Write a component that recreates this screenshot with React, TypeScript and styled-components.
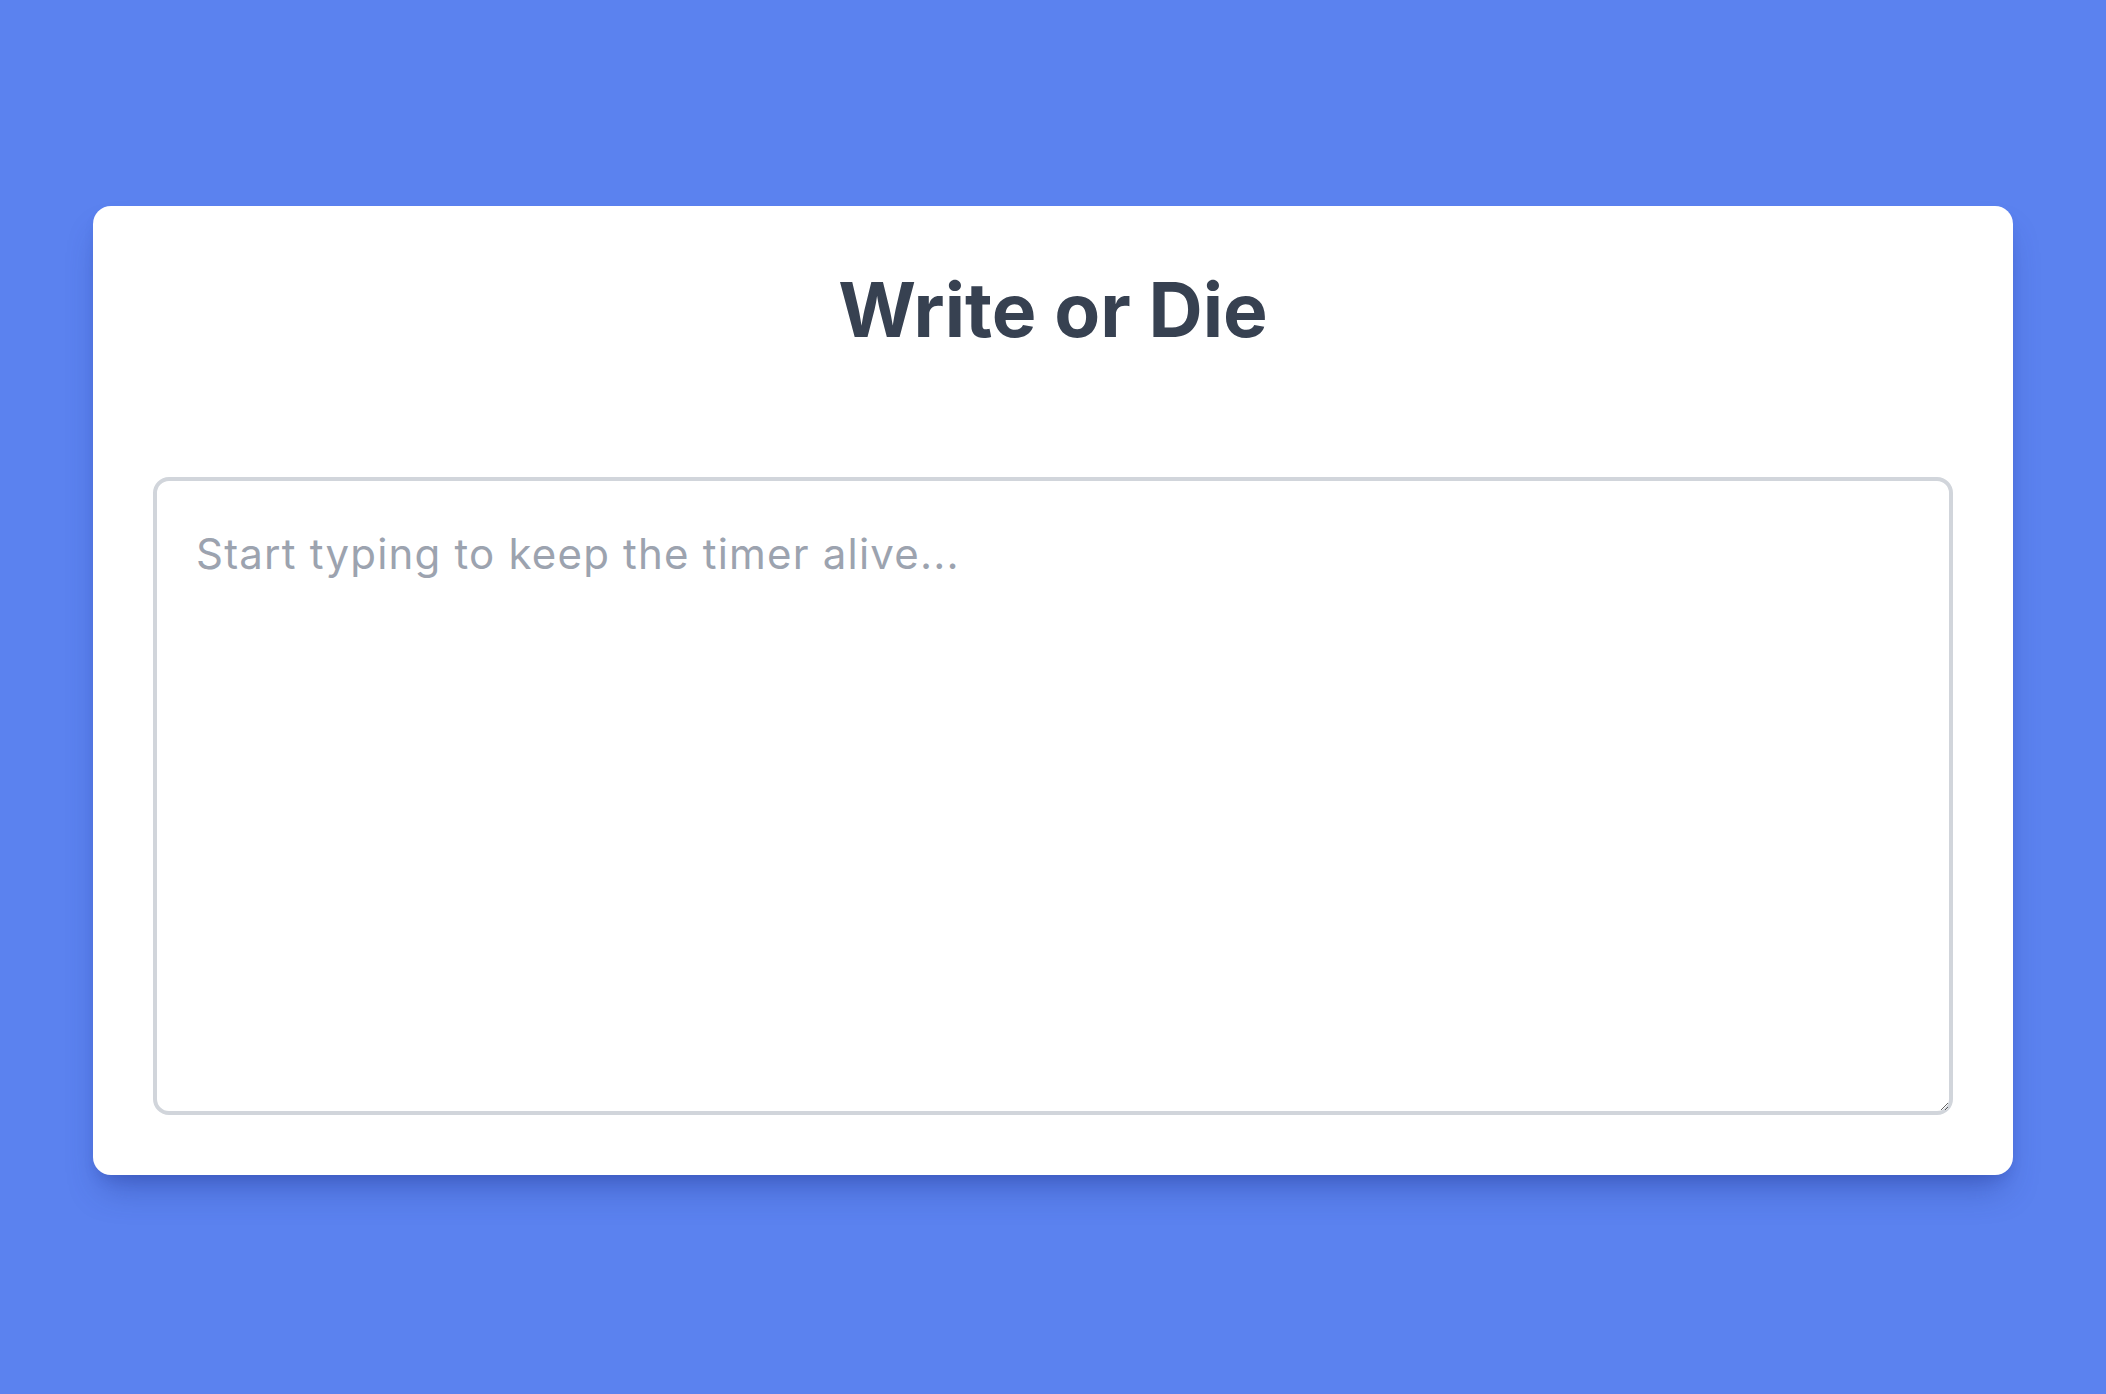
import React from "react";
import styled, { createGlobalStyle } from "styled-components";

const Global = createGlobalStyle`
  html, body { margin: 0; padding: 0; }
  body {
    background: #5b82ef;
    font-family: Inter, "Noto Sans", sans-serif;
  }
  * { box-sizing: border-box; }
`;

const Page = styled.div`
  min-height: 1394px;
  padding: 206px 93px 0;
  display: flex;
  justify-content: center;
  align-items: flex-start;
`;

const Card = styled.main`
  width: 1920px;
  background: #ffffff;
  border-radius: 18px;
  padding: 60px;
  box-shadow: 0 22px 34px -10px rgba(30, 50, 140, 0.4), 0 8px 14px -6px rgba(30, 50, 140, 0.25);
  display: flex;
  flex-direction: column;
  align-items: stretch;
`;

const Title = styled.h1`
  margin: 0 0 122px;
  text-align: center;
  font-family: Inter, sans-serif;
  font-weight: 700;
  font-size: 75px;
  line-height: 1.18;
  color: #374151;
`;

const Editor = styled.textarea`
  display: block;
  width: 100%;
  height: 638px;
  border: 4px solid #d1d5db;
  border-radius: 16px;
  padding: 41px 39px;
  font-family: Inter, sans-serif;
  font-size: 42px;
  letter-spacing: 1.2px;
  line-height: 1.5;
  color: #1f2937;
  resize: both;
  outline: none;
  &::placeholder { color: #9ca3af; }
`;

export default function App() {
  return (
    <>
      <Global />
      <Page>
        <Card>
          <Title>Write or Die</Title>
          <Editor placeholder="Start typing to keep the timer alive..." />
        </Card>
      </Page>
    </>
  );
}
